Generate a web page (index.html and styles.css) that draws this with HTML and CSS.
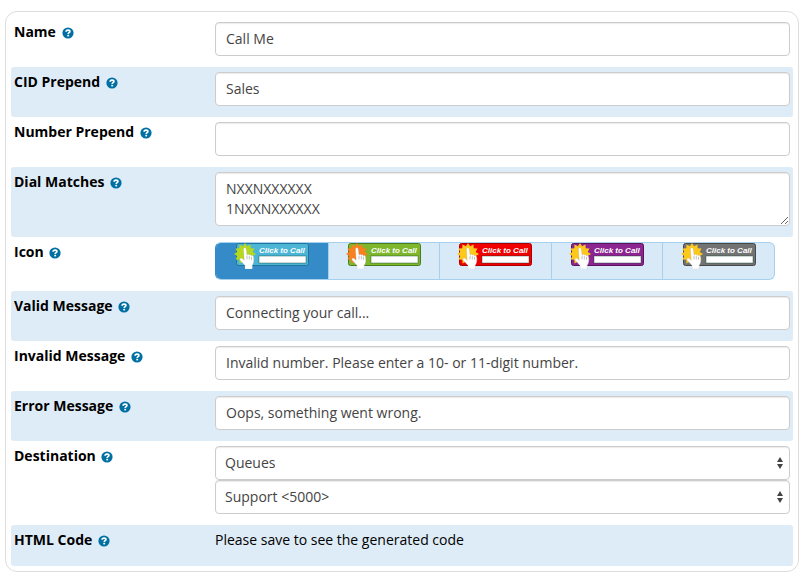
FILE: index.html
```html
<!DOCTYPE html>
<html lang="en">
<head>
    <meta charset="UTF-8">
    <meta name="viewport" content="width=device-width, initial-scale=1.0">
    <title>Click to Call</title>
    <link rel="stylesheet" href="styles.css">
</head>
<body>
    <!-- Shared shapes -->
    <svg class="sprite" aria-hidden="true">
        <symbol id="help" viewBox="0 0 12 12">
            <circle cx="6" cy="6" r="5.600" fill="#0070a3"/>
            <path d="M4.100 4.800C4.100 3.500 5 3.100 6 3.100c1.100 0 1.900.5 1.900 1.400 0 1.200-1.700 1.100-1.700 2.500" fill="none" stroke="#fff" stroke-width="1.700"/>
            <path d="M5.300 7.800h1.800v1.600H5.300z" fill="#fff"/>
        </symbol>
        <symbol id="arrows" viewBox="0 0 6 12">
            <path d="M3 0l3 5H0zM3 12l3-5H0z" fill="#444"/>
        </symbol>
        <symbol id="burst" viewBox="0 0 22 22">
            <path d="M11 0l2.100 3.300 3.400-1.800.2 3.800 3.800.2-1.800 3.400L22 11l-3.300 2.100 1.800 3.400-3.800.2-.2 3.800-3.400-1.800L11 22l-2.100-3.300-3.400 1.800-.2-3.800-3.800-.2 1.800-3.400L0 11l3.300-2.100-1.800-3.400 3.800-.2.2-3.800 3.400 1.800z"/>
        </symbol>
        <symbol id="hand" viewBox="0 0 16 22">
            <path d="M4.500 2.200c0-2 2.600-2 2.700 0L8 8c.6-1 2-.9 2.300.2.800-.8 2-.4 2.200.7 1-.7 2.100 0 2.100 1.300l.2 3.800c0 1.700-.8 3-1.500 4.200V22H6v-3.500L1.200 13.200C.2 11.800 1.800 10.400 3.200 11.600l2 1.600z" fill="#fff" stroke="#aaa" stroke-opacity=".5" stroke-width=".5"/>
            <path d="M8 8.500v3.800M10.300 9v3.500M12.500 9.800v3" stroke="#999" stroke-width=".6" fill="none"/>
        </symbol>
    </svg>

    <form class="settings">
        <div class="row">
            <label class="row-label" for="name">Name <svg class="help"><use href="#help"/></svg></label>
            <input class="control" type="text" id="name" value="Call Me">
        </div>
        <div class="row">
            <label class="row-label" for="cid">CID Prepend <svg class="help"><use href="#help"/></svg></label>
            <input class="control" type="text" id="cid" value="Sales">
        </div>
        <div class="row">
            <label class="row-label" for="number">Number Prepend <svg class="help"><use href="#help"/></svg></label>
            <input class="control" type="text" id="number">
        </div>
        <div class="row">
            <label class="row-label" for="matches">Dial Matches <svg class="help"><use href="#help"/></svg></label>
            <textarea class="control" id="matches" rows="2">NXXNXXXXXX
1NXXNXXXXXX</textarea>
        </div>
        <div class="row">
            <span class="row-label" id="icon-label">Icon <svg class="help"><use href="#help"/></svg></span>
            <div class="icon-set" role="radiogroup" aria-labelledby="icon-label">
                <label class="icon-option">
                    <input type="radio" name="icon" value="blue" aria-label="Blue" checked>
                    <svg class="call-btn blue" viewBox="0 0 76 27">
                        <rect class="plate" x="2.500" y=".5" width="72" height="22" rx="2"/>
                        <rect class="slot" x="25" y="13" width="47" height="7"/>
                        <text x="25" y="10">Click to Call</text>
                        <use class="star" href="#burst" width="22" height="22"/>
                        <use href="#hand" x="5" y="4" width="16" height="22"/>
                    </svg>
                </label>
                <label class="icon-option">
                    <input type="radio" name="icon" value="green" aria-label="Green">
                    <svg class="call-btn green" viewBox="0 0 76 27">
                        <rect class="plate" x="2.500" y=".5" width="72" height="22" rx="2"/>
                        <rect class="slot" x="25" y="13" width="47" height="7"/>
                        <text x="25" y="10">Click to Call</text>
                        <use class="star" href="#burst" width="22" height="22"/>
                        <use href="#hand" x="5" y="4" width="16" height="22"/>
                    </svg>
                </label>
                <label class="icon-option">
                    <input type="radio" name="icon" value="red" aria-label="Red">
                    <svg class="call-btn red" viewBox="0 0 76 27">
                        <rect class="plate" x="2.500" y=".5" width="72" height="22" rx="2"/>
                        <rect class="slot" x="25" y="13" width="47" height="7"/>
                        <text x="25" y="10">Click to Call</text>
                        <use class="star" href="#burst" width="22" height="22"/>
                        <use href="#hand" x="5" y="4" width="16" height="22"/>
                    </svg>
                </label>
                <label class="icon-option">
                    <input type="radio" name="icon" value="purple" aria-label="Purple">
                    <svg class="call-btn purple" viewBox="0 0 76 27">
                        <rect class="plate" x="2.500" y=".5" width="72" height="22" rx="2"/>
                        <rect class="slot" x="25" y="13" width="47" height="7"/>
                        <text x="25" y="10">Click to Call</text>
                        <use class="star" href="#burst" width="22" height="22"/>
                        <use href="#hand" x="5" y="4" width="16" height="22"/>
                    </svg>
                </label>
                <label class="icon-option">
                    <input type="radio" name="icon" value="gray" aria-label="Gray">
                    <svg class="call-btn gray" viewBox="0 0 76 27">
                        <rect class="plate" x="2.500" y=".5" width="72" height="22" rx="2"/>
                        <rect class="slot" x="25" y="13" width="47" height="7"/>
                        <text x="25" y="10">Click to Call</text>
                        <use class="star" href="#burst" width="22" height="22"/>
                        <use href="#hand" x="5" y="4" width="16" height="22"/>
                    </svg>
                </label>
            </div>
        </div>
        <div class="row">
            <label class="row-label" for="valid">Valid Message <svg class="help"><use href="#help"/></svg></label>
            <input class="control" type="text" id="valid" value="Connecting your call...">
        </div>
        <div class="row">
            <label class="row-label" for="invalid">Invalid Message <svg class="help"><use href="#help"/></svg></label>
            <input class="control" type="text" id="invalid" value="Invalid number. Please enter a 10- or 11-digit number.">
        </div>
        <div class="row">
            <label class="row-label" for="error">Error Message <svg class="help"><use href="#help"/></svg></label>
            <input class="control" type="text" id="error" value="Oops, something went wrong.">
        </div>
        <div class="row">
            <label class="row-label" for="destination">Destination <svg class="help"><use href="#help"/></svg></label>
            <div class="selects">
                <div class="select">
                    <select class="control" id="destination">
                        <option>Queues</option>
                    </select>
                    <svg class="arrows"><use href="#arrows"/></svg>
                </div>
                <div class="select">
                    <select class="control" aria-label="Queue">
                        <option>Support &lt;5000&gt;</option>
                    </select>
                    <svg class="arrows"><use href="#arrows"/></svg>
                </div>
            </div>
        </div>
        <div class="row">
            <span class="row-label">HTML Code <svg class="help"><use href="#help"/></svg></span>
            <p class="note">Please save to see the generated code</p>
        </div>
    </form>
</body>
</html>
```
FILE: styles.css
```css
* {
    box-sizing: border-box;
}

body {
    margin: 11px 8px 8px 5px;
    background: #fff;
    color: #000;
    font: 14px/20px "Open Sans", sans-serif;
}

.sprite {
    display: none;
}

.settings {
    padding: 5px;
    border: 1px solid #ddd;
    border-radius: 12px;
}

.row {
    display: grid;
    grid-template-columns: 201px minmax(0, 1fr);
    align-items: start;
    padding: 5px 3px 11px;
    border-radius: 3px;
}

.row:nth-child(even) {
    background: #deecf7;
}

.row-label {
    font-weight: bold;
}

.help {
    width: 12px;
    height: 12px;
    margin-left: 2px;
    vertical-align: -2px;
}

.control {
    display: block;
    width: 100%;
    height: 34px;
    margin: 0;
    padding: 6px 10px;
    border: 1px solid #ccc;
    border-radius: 4px;
    background: #fff;
    box-shadow: inset 0 1px 1px rgba(0, 0, 0, 0.08);
    color: #444;
    font: inherit;
}

input.control {
    padding-top: 5px;
    padding-bottom: 7px;
}

textarea.control {
    height: 54px;
    resize: vertical;
}

/* Icon picker */
.icon-set {
    display: grid;
    grid-template-columns: repeat(5, 1fr);
    height: 38px;
    margin-right: 15px;
    overflow: hidden;
    border: 1px solid #a6d1ee;
    border-radius: 6px;
    background: #d8eaf7;
}

.icon-option {
    display: flex;
    justify-content: center;
    position: relative;
    cursor: pointer;
}

.icon-option + .icon-option {
    border-left: 1px solid #a6d1ee;
}

.icon-option input {
    position: absolute;
    opacity: 0;
}

.icon-set:has(.icon-option:first-child input:checked) {
    border-left-color: #358ac8;
}

.icon-option:has(input:checked) {
    background: #358ac8;
}

.call-btn {
    width: 76px;
    height: 27px;
}

.call-btn text {
    fill: #fff;
    font: italic bold 8px "Liberation Sans", sans-serif;
}

.call-btn .slot {
    fill: #fff;
    stroke: rgba(0, 60, 40, 0.4);
}

.call-btn .star {
    fill: #fdc81c;
}

.blue .plate {
    fill: #4cb5d6;
    stroke: #23749a;
}

.call-btn.blue .star {
    fill: #b4d81e;
}

.green .plate {
    fill: #7eb62c;
    stroke: #4c7b1f;
}

.call-btn.green .star {
    fill: #f9801f;
}

.red .plate {
    fill: #f00000;
    stroke: #a00;
}

.purple .plate {
    fill: #8c2590;
    stroke: #59155c;
}

.gray .plate {
    fill: #737373;
    stroke: #484848;
}

.select {
    position: relative;
}

.select .control {
    padding-left: 9px;
    appearance: none;
}

.arrows {
    position: absolute;
    top: 11px;
    right: 7px;
    width: 6px;
    height: 12px;
    pointer-events: none;
}

.note {
    margin: 0;
    padding-bottom: 5px;
}
```
